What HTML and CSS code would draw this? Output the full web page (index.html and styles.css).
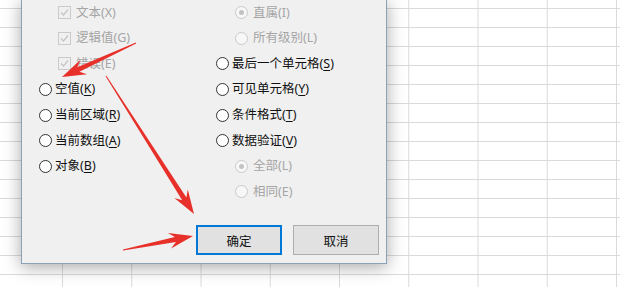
FILE: index.html
```html
<!DOCTYPE html>
<html lang="zh-CN">
<head>
  <meta charset="UTF-8" />
  <meta name="viewport" content="width=device-width, initial-scale=1" />
  <title>定位条件</title>
  <link rel="stylesheet" href="styles.css">
</head>
<body>
  <div class="dialog">
    <div class="options">
      <div class="col">
        <div class="opt sub off"><span class="check"><svg width="11" height="11" viewBox="0 0 11 11"><path d="M2 5.5 L4.5 8 L9 2.5" /></svg></span><span>文本(X)</span></div>
        <div class="opt sub off"><span class="check"><svg width="11" height="11" viewBox="0 0 11 11"><path d="M2 5.5 L4.5 8 L9 2.5" /></svg></span><span>逻辑值(G)</span></div>
        <div class="opt sub off"><span class="check"><svg width="11" height="11" viewBox="0 0 11 11"><path d="M2 5.5 L4.5 8 L9 2.5" /></svg></span><span>错误(E)</span></div>
        <div class="opt"><span class="radio"></span><span>空值(<u>K</u>)</span></div>
        <div class="opt"><span class="radio"></span><span>当前区域(<u>R</u>)</span></div>
        <div class="opt"><span class="radio"></span><span>当前数组(<u>A</u>)</span></div>
        <div class="opt"><span class="radio"></span><span>对象(<u>B</u>)</span></div>
      </div>
      <div class="col">
        <div class="opt sub off"><span class="radio on"></span><span>直属(I)</span></div>
        <div class="opt sub off"><span class="radio"></span><span>所有级别(L)</span></div>
        <div class="opt"><span class="radio"></span><span>最后一个单元格(<u>S</u>)</span></div>
        <div class="opt"><span class="radio"></span><span>可见单元格(<u>Y</u>)</span></div>
        <div class="opt"><span class="radio"></span><span>条件格式(<u>T</u>)</span></div>
        <div class="opt"><span class="radio"></span><span>数据验证(<u>V</u>)</span></div>
        <div class="opt sub off"><span class="radio on"></span><span>全部(L)</span></div>
        <div class="opt sub off"><span class="radio"></span><span>相同(E)</span></div>
      </div>
    </div>
    <div class="actions">
      <button class="btn primary">确定</button>
      <button class="btn">取消</button>
    </div>
  </div>

  <!-- 标注箭头 -->
  <svg class="arrows" width="620" height="287" viewBox="0 0 620 287">
    <polygon points="135.8,42.5 77.3,67.2 80.5,59.7 62,77 87.1,74.3 79.4,71.8 136.2,43.5" />
    <polygon points="105.6,76.3 182.2,200.2 174.4,198.1 194,214 187.8,189.5 186.4,197.5 106.4,75.7" />
    <polygon points="123.1,250.5 175.9,242 171.1,248.5 193,236 167.9,232.9 174.9,237.1 122.9,249.5" />
  </svg>
</body>
</html>
```

FILE: styles.css
```css
* {
  box-sizing: border-box;
}
html, body {
  margin: 0;
}
body {
  position: relative;
  width: 620px;
  height: 287px;
  overflow: hidden;
  font-family: "Noto Sans", "Noto Sans CJK SC", sans-serif;
  font-size: 12.5px;
  color: #111;
  background-color: #fff;
  background-image:
    linear-gradient(#dadada 1px, transparent 1px),
    linear-gradient(90deg, #dadada 1px, transparent 1px);
  background-size: 69.25px 19px;
  background-position: 62px 8px;
}
.dialog {
  position: absolute;
  left: 21px;
  top: -1px;
  width: 366px;
  height: 265px;
  display: flex;
  flex-direction: column;
  background: #f0f0f0;
  border: 1px solid #8ba1b5;
  box-shadow: 0 3px 16px rgba(0, 0, 0, 0.35);
}
.options {
  display: grid;
  grid-template-columns: 177px 1fr;
  padding-left: 17px;
}
.opt {
  height: 25.6px;
  display: flex;
  align-items: center;
  gap: 3px;
  white-space: nowrap;
  line-height: 1;
}
.opt.sub {
  padding-left: 19px;
  gap: 5px;
}
.opt.off {
  color: #a5a5a5;
}
u {
  text-underline-offset: 2px;
}
.radio {
  flex: none;
  width: 13px;
  height: 13px;
  border: 1px solid #333;
  border-radius: 50%;
  background: #fff;
  display: flex;
  align-items: center;
  justify-content: center;
}
.off .radio {
  border-color: #cacaca;
  background: #f7f7f7;
}
.radio.on::after {
  content: "";
  width: 5px;
  height: 5px;
  border-radius: 50%;
  background: #c2c2c2;
}
.check {
  flex: none;
  width: 13px;
  height: 13px;
  border: 1px solid #cacaca;
  display: flex;
}
.check path {
  fill: none;
  stroke: #c4c4c4;
  stroke-width: 1.2;
}
.actions {
  display: flex;
  justify-content: flex-end;
  gap: 11px;
  margin-top: auto;
  padding: 0 7px 8px 0;
}
.btn {
  width: 86px;
  height: 30px;
  font: inherit;
  color: #111;
  background: #e1e1e1;
  border: 1px solid #adadad;
}
.btn.primary {
  border: 2px solid #0078d7;
}
.arrows {
  position: absolute;
  left: 0;
  top: 0;
}
.arrows polygon {
  fill: #e8302a;
}
```
